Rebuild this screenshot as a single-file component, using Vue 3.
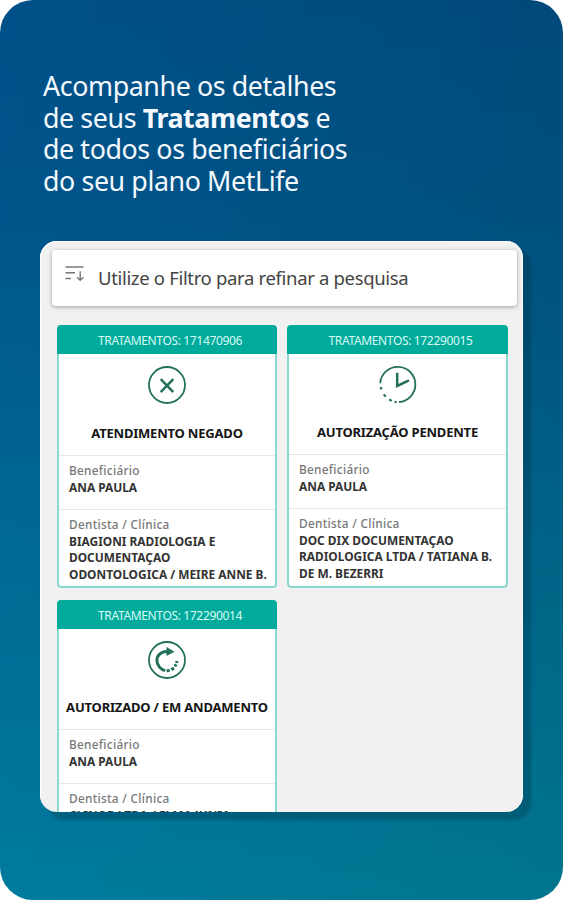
<script setup>
const cards = [
  {
    id: '171470906', icon: 'denied', status: 'ATENDIMENTO NEGADO', person: 'ANA PAULA', low: true,
    clinic: ['BIAGIONI RADIOLOGIA E', 'DOCUMENTAÇAO', 'ODONTOLOGICA / MEIRE ANNE B.'],
  },
  {
    id: '172290015', icon: 'pending', status: 'AUTORIZAÇÃO PENDENTE', person: 'ANA PAULA',
    clinic: ['DOC DIX DOCUMENTAÇAO', 'RADIOLOGICA LTDA / TATIANA B.', 'DE M. BEZERRI'],
  },
  {
    id: '172290014', icon: 'progress', status: 'AUTORIZADO / EM ANDAMENTO', person: 'ANA PAULA',
    clinic: ['CLINOR LTDA / ELMA JUNIA'],
  },
]
</script>

<template>
  <main class="page">
    <h1 class="headline">
      <span>Acompanhe os detalhes</span>
      <span>de seus <strong>Tratamentos</strong> e</span>
      <span>de todos os beneficiários</span>
      <span>do seu plano MetLife</span>
    </h1>
    <section class="panel">
      <div class="filter">
        <svg class="sort" viewBox="0 0 20 18" width="20" height="18">
          <path d="M.5 2H18.5M.5 7.8H10M.5 13.5H6" />
          <path d="M15.2 6.2V15M12 12.2L15.2 15.2L18.4 12.2" />
        </svg>
        <span>Utilize o Filtro para refinar a pesquisa</span>
      </div>
      <div class="grid">
        <article v-for="c in cards" :key="c.id" class="card" :class="{ low: c.low }">
          <header>TRATAMENTOS: {{ c.id }}</header>
          <div class="body">
            <div class="status">
              <svg class="icon" viewBox="0 0 40 40" width="40" height="40">
                <template v-if="c.icon === 'denied'">
                  <circle cx="20" cy="20" r="18" />
                  <path class="bold" d="M13.7 14.2L26.3 27.2M26.3 14.2L13.7 27.2" />
                </template>
                <template v-else-if="c.icon === 'pending'">
                  <path d="M2.2 18.2A17.6 17.6 0 1 1 21 37" />
                  <path class="dash" d="M2.7 22L3.4 24.4M5.8 29.4L7.6 31.6M11.2 34.5L13.8 35.9M16.6 36.9L18.6 37.2" />
                  <path class="bold" d="M19.2 7.8V21L31 15.4" />
                </template>
                <template v-else>
                  <circle cx="20" cy="20" r="18" />
                  <path class="heavy" d="M22 11.5H20C13.8 11.5 9.9 15.5 9.9 20.2C9.9 25.6 14 29.9 18.2 30.5" />
                  <path class="heavy" d="M19.6 30.8L22.7 30.4M24.3 29.7L27 27.9M27.8 26.3L29.2 24.4M29.6 23L30 21" />
                  <path class="arrow" d="M19.5 7L27.5 11.8L19.5 16Z" />
                </template>
              </svg>
              <h2>{{ c.status }}</h2>
            </div>
            <dl class="person">
              <dt>Beneficiário</dt>
              <dd>{{ c.person }}</dd>
            </dl>
            <dl class="clinic">
              <dt>Dentista / Clínica</dt>
              <dd v-for="line in c.clinic" :key="line">{{ line }}</dd>
            </dl>
          </div>
        </article>
      </div>
    </section>
  </main>
</template>

<style>
body { margin: 0; background: #fff; }
</style>

<style scoped>
* { box-sizing: border-box; }
.page {
  width: 563px;
  height: 900px;
  padding: 70px 40px 0;
  border-radius: 33px;
  background: linear-gradient(90deg, rgba(0, 100, 180, .12), rgba(0, 50, 60, .12)),
    linear-gradient(180deg, #004d82 0%, #005486 25%, #006890 58%, #007f9a 100%);
  font-family: "Noto Sans", sans-serif;
  overflow: hidden;
}
.headline {
  display: flex;
  flex-direction: column;
  margin: 0;
  padding-left: 3px;
  height: 171px;
  color: #f4f9ff;
  font-size: 26.8px;
  font-weight: 400;
  letter-spacing: -.4px;
  line-height: 31.7px;
  white-space: nowrap;
}
.headline strong { font-weight: 700; }
.panel {
  width: 483px;
  height: 571px;
  padding: 9px 6px 0 12px;
  border-radius: 17px;
  background: #f1f1f1;
  overflow: hidden;
  box-shadow: inset 1px 1px 1px #fff, inset -1px 0 1px #fff, 8px 8px 3px rgba(0, 40, 60, .28);
}
.filter {
  display: flex;
  align-items: center;
  gap: 13px;
  width: 465px;
  height: 56px;
  padding: 0 0 2px 13px;
  border-radius: 4px;
  background: #fff;
  box-shadow: 0 1px 4px rgba(0, 0, 0, .34);
  color: #444;
  font-size: 18.5px;
  letter-spacing: -.33px;
  white-space: nowrap;
}
.sort {
  flex: none;
  margin-top: -6px;
  fill: none;
  stroke: #777;
  stroke-width: 1.4;
}
.grid {
  display: grid;
  grid-template-columns: 220px 221px;
  column-gap: 10px;
  row-gap: 12px;
  margin: 19px 0 0 5px;
}
.card {
  height: 263px;
  border-radius: 4px;
  overflow: hidden;
  white-space: nowrap;
}
header {
  height: 29px;
  padding-left: 6px;
  background: #00ab9b;
  color: #d9fbf6;
  font-size: 12px;
  letter-spacing: -.35px;
  line-height: 32px;
  text-align: center;
}
.body {
  height: 234px;
  border: 2px solid #8bd6cd;
  border-top: 0;
  border-radius: 0 0 4px 4px;
  background: #fff;
}
.status {
  display: flex;
  flex-direction: column;
  align-items: center;
  height: 100px;
  padding-top: 11px;
}
.low .status { height: 101px; }
.icon { flex: none; fill: none; stroke: #23705c; stroke-width: 1.8; }
.bold { stroke-width: 2.5; }
.dash { stroke-width: 2.2; }
.heavy { stroke-width: 3; }
.arrow { fill: #23705c; stroke: none; }
h2 {
  margin: 18px 0 0;
  color: #161616;
  font-size: 13px;
  font-weight: 700;
  letter-spacing: -.2px;
  line-height: 18px;
}
.low h2 { margin-top: 19px; }
dl {
  margin: 0;
  padding: 6px 0 0 10px;
  border-top: 1px solid #e6e6e6;
  font-size: 11.9px;
  line-height: 16.5px;
}
.person { height: 54px; }
dt { color: #777; font-size: 11.8px; font-weight: 500; letter-spacing: .3px; }
dd { margin: 0; color: #333; font-weight: 700; }
</style>
